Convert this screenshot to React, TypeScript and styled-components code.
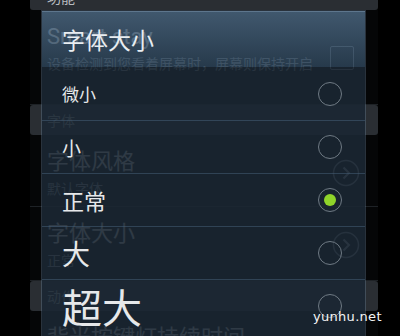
import styled, { createGlobalStyle } from "styled-components";

const GlobalStyle = createGlobalStyle`
  html, body {
    margin: 0;
    padding: 0;
    background: #000;
  }
  body {
    font-family: "Noto Sans CJK SC", "Noto Sans", sans-serif;
  }
`;

const fontSizes = [
  { label: "微小", size: 17 },
  { label: "小", size: 19 },
  { label: "正常", size: 22 },
  { label: "大", size: 28 },
  { label: "超大", size: 40 },
];

export default function App() {
  const selected = 2;

  return (
    <>
      <GlobalStyle />
      <Screen>
        <SettingsList>
          <SectionHeader>功能</SectionHeader>
          <SettingRow $height={95}>
            <RowText>
              <RowTitle>Smart stay</RowTitle>
              <RowSummary>设备检测到您看着屏幕时，屏幕则保持开启</RowSummary>
            </RowText>
            <CheckBox />
          </SettingRow>
          <SectionHeader $tall>字体</SectionHeader>
          <SettingRow $height={72}>
            <RowText>
              <RowTitle>字体风格</RowTitle>
              <RowSummary>默认字体</RowSummary>
            </RowText>
            <ArrowCircle />
          </SettingRow>
          <SettingRow $height={74}>
            <RowText>
              <RowTitle>字体大小</RowTitle>
              <RowSummary>正常</RowSummary>
            </RowText>
            <ArrowCircle />
          </SettingRow>
          <SectionHeader $tall>动作</SectionHeader>
          <SettingRow $height={60}>
            <RowText>
              <RowTitle>背光按键灯持续时间</RowTitle>
            </RowText>
          </SettingRow>
        </SettingsList>

        <Dialog>
          <DialogTitle>字体大小</DialogTitle>
          <OptionList>
            {fontSizes.map((item, i) => (
              <Option key={item.label}>
                <OptionLabel $size={item.size}>{item.label}</OptionLabel>
                <Radio $checked={i === selected} />
              </Option>
            ))}
          </OptionList>
        </Dialog>

        <Watermark>yunhu.net</Watermark>
      </Screen>
    </>
  );
}

function ArrowCircle() {
  return (
    <ArrowIcon width="28" height="28" viewBox="0 0 28 28">
      <circle cx="14" cy="14" r="12.5" fill="none" stroke="#8a9098" strokeWidth="1.5" />
      <path d="M11.5 8.5 L17 14 L11.5 19.5" fill="none" stroke="#a0a6ad" strokeWidth="2" />
    </ArrowIcon>
  );
}

const Screen = styled.div`
  position: relative;
  width: 400px;
  height: 336px;
  overflow: hidden;
  background: #000;
`;

const SettingsList = styled.div`
  display: flex;
  flex-direction: column;
  margin: -16px 22px 0 30px;
  background: #050607;
`;

const SectionHeader = styled.div<{ $tall?: boolean }>`
  height: ${(p) => (p.$tall ? 30 : 26)}px;
  display: flex;
  align-items: center;
  padding-left: 17px;
  background: #2a2e33;
  border-radius: 3px;
  color: #b8bcc0;
  font-size: 14px;
`;

const SettingRow = styled.div<{ $height: number }>`
  height: ${(p) => p.$height}px;
  display: flex;
  align-items: flex-start;
  justify-content: space-between;
  padding: 14px 18px 0 17px;
  box-sizing: border-box;
  border-bottom: 1px solid #1e2226;
`;

const RowText = styled.div`
  display: flex;
  flex-direction: column;
  gap: 4px;
`;

const RowTitle = styled.div`
  color: #e4e4e4;
  font-size: 22px;
  line-height: 26px;
  font-family: "Roboto", "Noto Sans CJK SC", sans-serif;
`;

const RowSummary = styled.div`
  color: #9ea4aa;
  font-size: 14px;
  line-height: 18px;
`;

const CheckBox = styled.div`
  width: 22px;
  height: 22px;
  margin-top: 22px;
  margin-right: 6px;
  border: 1.5px solid #8a9098;
  border-radius: 2px;
`;

const ArrowIcon = styled.svg`
  margin-top: 10px;
`;

const Dialog = styled.div`
  position: absolute;
  left: 41px;
  top: 10px;
  width: 325px;
  height: 340px;
  display: flex;
  flex-direction: column;
  border: 1px solid rgba(110, 135, 160, 0.35);
  border-bottom: none;
  box-sizing: border-box;
`;

const DialogTitle = styled.div`
  height: 56px;
  flex-shrink: 0;
  display: flex;
  align-items: center;
  padding-left: 20px;
  color: #e8edf1;
  font-size: 23px;
  background: linear-gradient(
    to bottom,
    rgba(76, 104, 130, 0.84),
    rgba(44, 66, 86, 0.86)
  );
  box-shadow: inset 0 1px 0 rgba(150, 175, 200, 0.35);
`;

const OptionList = styled.div`
  flex: 1;
  display: flex;
  flex-direction: column;
  background: rgba(27, 39, 51, 0.9);
`;

const Option = styled.div`
  height: 53px;
  flex-shrink: 0;
  display: flex;
  align-items: center;
  justify-content: space-between;
  padding: 0 23px 0 20px;
  box-sizing: border-box;
  border-top: 1px solid rgba(70, 95, 118, 0.55);

  &:first-of-type {
    border-top: none;
  }
`;

const OptionLabel = styled.span<{ $size: number }>`
  color: #e6e8ea;
  font-size: ${(p) => p.$size}px;
  line-height: 1;
`;

const Radio = styled.span<{ $checked?: boolean }>`
  width: 24px;
  height: 24px;
  border-radius: 50%;
  border: 1.5px solid #6f7a84;
  box-sizing: border-box;
  display: flex;
  align-items: center;
  justify-content: center;

  &::after {
    content: "";
    display: ${(p) => (p.$checked ? "block" : "none")};
    width: 12px;
    height: 12px;
    border-radius: 50%;
    background: #8fd42a;
  }
`;

const Watermark = styled.div`
  position: absolute;
  left: 313px;
  top: 309px;
  color: #f4f4f4;
  font-size: 13px;
  font-family: "DejaVu Sans", sans-serif;
  letter-spacing: 0.3px;
`;
